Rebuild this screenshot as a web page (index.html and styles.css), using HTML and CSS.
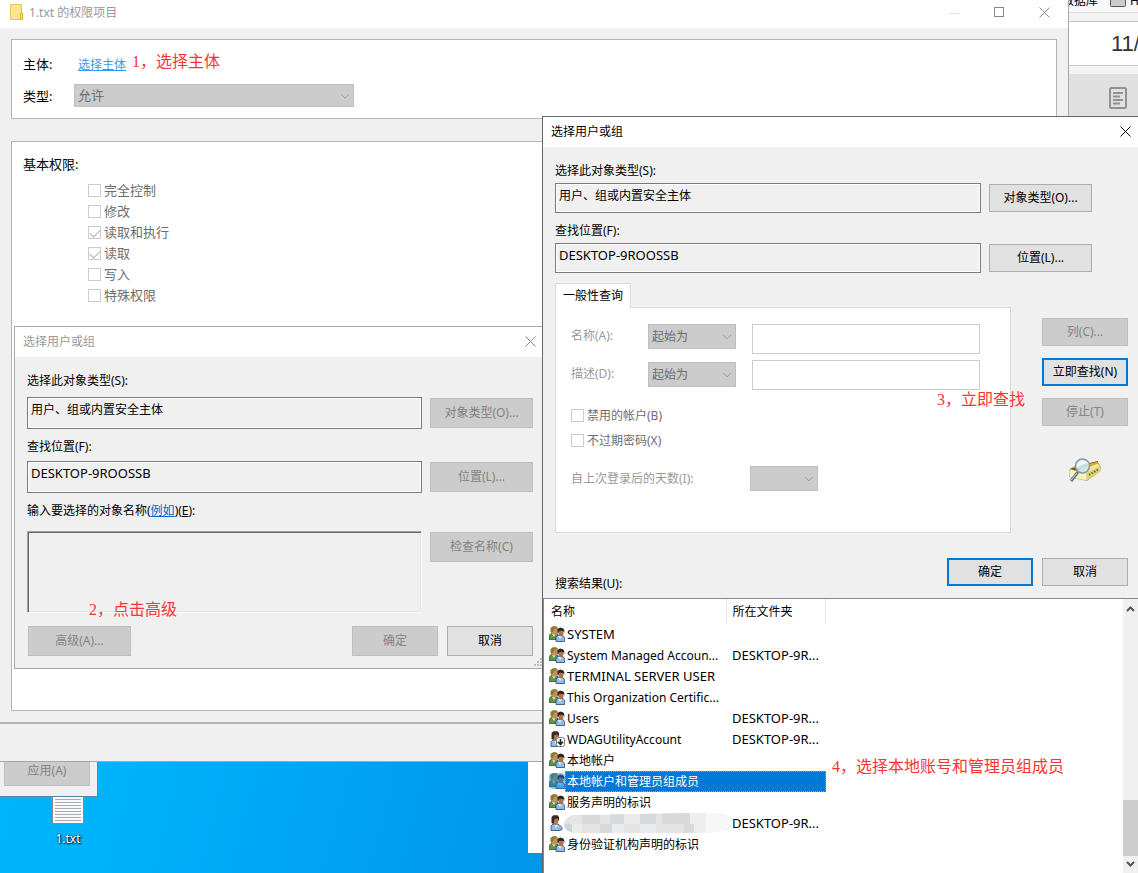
FILE: index.html
```html
<!DOCTYPE html>
<html lang="zh-CN">
<head>
<meta charset="utf-8">
<title>1.txt 的权限项目</title>
<link rel="stylesheet" href="styles.css">
</head>
<body>
<svg class="defs" aria-hidden="true">
  <symbol id="chevron" viewBox="0 0 10 6"><path d="M1 1l4 4 4-4" fill="none" stroke="currentColor"/></symbol>
  <symbol id="close" viewBox="0 0 11 11"><path d="M.5.5l10 10M10.500.5l-10 10" fill="none" stroke="currentColor"/></symbol>
  <symbol id="group" viewBox="0 0 16 16">
    <path d="M0 13.500v-4l2-2 5-.5 2 2v4.500z" fill="#5f9148" stroke="#36572c" stroke-width=".8"/>
    <path d="M3 8l2 3 1.500-3z" fill="#d9ecc7"/>
    <path d="M2 2l2-1.500h3L9 2v4L7 8.500H4L2 6.500z" fill="#c6925c"/>
    <path d="M1.500 6V2L4 .3h3L9 2 5.500 2.500 4 6z" fill="#8d7a35"/>
    <path d="M7 15.500v-4L9 9l5 .500 1.600 2v4z" fill="#8fbcec" stroke="#294566" stroke-width=".8"/>
    <path d="M9 10l2 3 2-3z" fill="#e4f1ff"/>
    <path d="M9 4l4-1 1.500 2v3L13 10.300h-2L9.500 8z" fill="#a9744a"/>
    <path d="M8.500 8V3L11 1.500l3 .7L15.300 4v3l-1-2-3.800-.2z" fill="#2b2420"/>
  </symbol>
  <symbol id="user" viewBox="0 0 16 16">
    <path d="M2 15.500V11l2-2 6 .5 3 3v2l-2 1z" fill="#8fbcec" stroke="#294566" stroke-width=".8"/>
    <path d="M5 9.500l2 4 2-4z" fill="#e4f1ff"/>
    <path d="M3.500 3l4-1 1.700 2v4l-2 2.300H5.500L3.500 8z" fill="#b07d52"/>
    <path d="M2.500 8V2L4.500.3h4L10 2v4.500L8.500 3.500l-3 .500-1 5z" fill="#3a2a22"/>
  </symbol>
  <symbol id="down-badge" viewBox="0 0 16 16">
    <rect x="7.500" y="6.500" width="8" height="9" rx="2" fill="#fff" stroke="#777"/>
    <path d="M11.500 8v5M9 10.800l2.500 2.700 2.500-2.700" stroke="#222" stroke-width="1.600" fill="none"/>
  </symbol>
</svg>

<div class="desktop">
  <div class="file-shortcut">
    <svg width="32" height="40" viewBox="0 0 32 40" aria-hidden="true"><path d="M.5.5h31v39H.5z" fill="#fafafa" stroke="#8c8782"/><path d="M3 6.500h26M3 9.500h26M3 12.500h26M3 15.500h26M3 18.500h26M3 21.500h26M3 24.500h26M3 27.500h26M3 30.500h26M3 33.500h26M3 36.500h26" stroke="#a9acae"/></svg>
    <span>1.txt</span>
  </div>
  <div class="back-window"></div>

  <div class="side-app">
    <div class="side-bookmarks"><span>数据库</span><svg width="16" height="14" viewBox="0 0 16 14" aria-hidden="true"><rect x=".5" y=".5" width="15" height="13" rx="1" fill="#ccc" stroke="#555"/></svg><span>H</span></div>
    <div class="side-strip"></div>
    <div class="side-page">11/</div>
    <div class="side-strip"></div>
    <div class="side-tools">
      <svg width="18" height="22" viewBox="0 0 18 22" fill="none" stroke="#929292" stroke-width="2" aria-hidden="true"><rect x="1" y="1" width="16" height="20" rx="1.500"/><path d="M4 6h10M4 9.500h7M4 13h10M4 16.500h7"/></svg>
    </div>
  </div>

  <div class="properties-window"><button class="btn" disabled>应用(A)</button></div>

  <main class="window permission-window">
    <header class="titlebar">
      <svg width="14" height="16" viewBox="0 0 14 16" aria-hidden="true"><path d="M.5.5h11v8h1v7H.5z" fill="#ffe491" stroke="#e9c34f"/><path d="M10.500 15V9.500h2V15z" fill="#fff0a8" stroke="#dcae37"/></svg>
      <h1>1.txt 的权限项目</h1>
      <div class="caption-buttons">
        <button aria-label="最小化" disabled><svg width="11" height="11" viewBox="0 0 11 11"><path d="M0 6.500h10" stroke="#e4e4e4"/></svg></button>
        <button aria-label="最大化"><svg width="11" height="11" viewBox="0 0 11 11"><rect x=".5" y=".5" width="9" height="9" fill="none" stroke="#888"/></svg></button>
        <button aria-label="关闭"><svg width="11" height="11"><use href="#close"/></svg></button>
      </div>
    </header>
    <div class="permission-body">
      <section class="panel principal">
        <span>主体:</span><a href="#">选择主体</a>
        <label for="type">类型:</label>
        <div class="combo"><select id="type" disabled><option>允许</option></select><svg width="10" height="6"><use href="#chevron"/></svg></div>
      </section>
      <section class="panel basic">
        <h2>基本权限:</h2>
        <div class="checks">
          <label><input type="checkbox" disabled>完全控制</label>
          <label><input type="checkbox" disabled>修改</label>
          <label><input type="checkbox" disabled checked>读取和执行</label>
          <label><input type="checkbox" disabled checked>读取</label>
          <label><input type="checkbox" disabled>写入</label>
          <label><input type="checkbox" disabled>特殊权限</label>
        </div>
      </section>
    </div>
    <footer class="permission-footer"></footer>
  </main>

  <section class="window select-window">
    <header class="titlebar">
      <h1>选择用户或组</h1>
      <div class="caption-buttons"><button aria-label="关闭"><svg width="11" height="11"><use href="#close"/></svg></button></div>
    </header>
    <div class="select-body">
      <label for="s-type">选择此对象类型(S):</label>
      <input class="sunken" id="s-type" readonly value="用户、组或内置安全主体">
      <button class="btn" disabled>对象类型(O)...</button>
      <label for="s-loc">查找位置(F):</label>
      <input class="sunken latin" id="s-loc" readonly value="DESKTOP-9ROOSSB">
      <button class="btn" disabled>位置(L)...</button>
      <label for="s-names">输入要选择的对象名称(<a href="#">例如</a>)(<u>E</u>):</label>
      <textarea id="s-names" readonly></textarea>
      <button class="btn" disabled>检查名称(C)</button>
      <div class="actions">
        <button class="btn wide" disabled>高级(A)...</button>
        <button class="btn" disabled>确定</button>
        <button class="btn">取消</button>
      </div>
    </div>
    <svg class="grip" width="9" height="9" viewBox="0 0 9 9" fill="#bfbfbf" aria-hidden="true"><path d="M6 0h2v2H6zM3 3h2v2H3zM6 3h2v2H6zM0 6h2v2H0zM3 6h2v2H3zM6 6h2v2H6z"/></svg>
  </section>

  <section class="window search-window">
    <header class="titlebar">
      <h1>选择用户或组</h1>
      <div class="caption-buttons"><button aria-label="关闭"><svg width="11" height="11"><use href="#close"/></svg></button></div>
    </header>
    <div class="scope">
      <label for="q-type">选择此对象类型(S):</label>
      <input class="sunken" id="q-type" readonly value="用户、组或内置安全主体">
      <button class="btn">对象类型(O)...</button>
      <label for="q-loc">查找位置(F):</label>
      <input class="sunken latin" id="q-loc" readonly value="DESKTOP-9ROOSSB">
      <button class="btn">位置(L)...</button>
    </div>
    <div class="query">
      <div class="tabs">
        <button class="tab">一般性查询</button>
        <div class="tab-page">
          <div class="fields">
            <label for="q-name">名称(A):</label>
            <div class="combo"><select aria-label="名称条件" disabled><option>起始为</option></select><svg width="10" height="6"><use href="#chevron"/></svg></div>
            <input id="q-name" disabled>
            <label class="second" for="q-desc">描述(D):</label>
            <div class="combo second"><select aria-label="描述条件" disabled><option>起始为</option></select><svg width="10" height="6"><use href="#chevron"/></svg></div>
            <input id="q-desc" disabled>
          </div>
          <div class="checks">
            <label><input type="checkbox" disabled>禁用的帐户(B)</label>
            <label><input type="checkbox" disabled>不过期密码(X)</label>
          </div>
          <div class="days">
            <label for="q-days">自上次登录后的天数(I):</label>
            <div class="combo"><select id="q-days" disabled><option></option></select><svg width="10" height="6"><use href="#chevron"/></svg></div>
          </div>
        </div>
      </div>
      <div class="side-buttons">
        <button class="btn" disabled>列(C)...</button>
        <button class="btn primary">立即查找(N)</button>
        <button class="btn" disabled>停止(T)</button>
        <svg width="32" height="26" viewBox="0 0 32 26" aria-hidden="true">
          <path d="M1 11l6-3 22-3 2 3v5L18 22.500 1 19z" fill="#efe79a" stroke="#a69a4c" stroke-width=".8"/>
          <path d="M17 15L31 8v5.500L18 22.500z" fill="#ddd272"/>
          <path d="M17 15v7.300L1 19v-7z" fill="#f8f3b8"/>
          <path d="M17 7l12-3.500v2L20 9z" fill="#e5a51c"/><path d="M20 5.500l9-2" stroke="#8d6420"/><path d="M1 11l6-2 5 3-4 1z" fill="#625824"/>
          <path d="M20 17l9-5.500" stroke="#726a35" stroke-width="2" stroke-dasharray="1.500 1.500"/>
          <path d="M9 14l-7 9" stroke="#6d7580" stroke-width="3"/><path d="M8 15l-6 7" stroke="#c6ccd2"/>
          <circle cx="13.500" cy="8" r="7" fill="#c9e3f5" fill-opacity=".9" stroke="#8796a7" stroke-width="1.500"/>
          <path d="M7.500 10q6-5 12-4.500Q17 2 12 2.500 7.500 4.500 7.500 10" fill="#eef9ff"/>
          <path d="M8 11l11-4" stroke="#c5d6a6"/>
        </svg>
      </div>
    </div>
    <div class="confirm">
      <h2>搜索结果(U):</h2>
      <button class="btn primary">确定</button>
      <button class="btn">取消</button>
    </div>
    <div class="results">
      <div class="result-area">
      <table>
        <thead><tr><th class="name-col">名称</th><th>所在文件夹</th></tr></thead>
        <tbody>
          <tr><td><div class="entry"><svg><use href="#group"/></svg><span class="latin">SYSTEM</span></div></td><td></td></tr>
          <tr><td><div class="entry"><svg><use href="#group"/></svg><span>System Managed Accoun...</span></div></td><td class="latin">DESKTOP-9R...</td></tr>
          <tr><td><div class="entry"><svg><use href="#group"/></svg><span class="latin">TERMINAL SERVER USER</span></div></td><td></td></tr>
          <tr><td><div class="entry"><svg><use href="#group"/></svg><span>This Organization Certific...</span></div></td><td></td></tr>
          <tr><td><div class="entry"><svg><use href="#group"/></svg><span>Users</span></div></td><td class="latin">DESKTOP-9R...</td></tr>
          <tr><td><div class="entry"><svg><use href="#user"/><use href="#down-badge"/></svg><span>WDAGUtilityAccount</span></div></td><td class="latin">DESKTOP-9R...</td></tr>
          <tr><td><div class="entry"><svg><use href="#group"/></svg><span>本地帐户</span></div></td><td></td></tr>
          <tr class="selected"><td colspan="2"><div class="entry"><svg><use href="#group"/><rect width="16" height="16" rx="4" fill="#0078d7" fill-opacity=".45"/></svg><span>本地帐户和管理员组成员</span></div></td></tr>
          <tr><td><div class="entry"><svg><use href="#group"/></svg><span>服务声明的标识</span></div></td><td></td></tr>
          <tr><td><div class="entry"><svg><use href="#user"/></svg><svg class="mosaic" viewBox="0 0 168 21" aria-hidden="true"><defs><clipPath id="blob"><path d="M8 2h12l110-2 28 1q10 3 10 8-1 9-14 10l-34 1H12Q0 19 0 10 1 5 8 2z"/></clipPath></defs><g clip-path="url(#blob)"><path d="M0 0h168v21H0z" fill="#e4e4e4"/><path d="M18 0h18v11H18zM46 0h14v11H46zM76 0h16v11H76zM98 0h28v11H98zM36 11h12v10H36zM120 11h10v10h-10z" fill="#d8d9da"/><path d="M60 0h16v11H60zM8 11h10v10H8zM48 11h12v10H48zM76 11h16v10H76z" fill="#e9ebed"/><path d="M126 0h16v11h-16zM130 11h12v10h-12z" fill="#eee"/><path d="M142 0h26v21h-26z" fill="#f7f7f7"/><path d="M0 11h8v10H0z" fill="#cdd5dc"/></g></svg></div></td><td class="latin">DESKTOP-9R...</td></tr>
          <tr><td><div class="entry"><svg><use href="#group"/></svg><span>身份验证机构声明的标识</span></div></td><td></td></tr>
        </tbody>
      </table>
      </div>
      <div class="scrollbar">
        <svg viewBox="0 0 15 17" aria-hidden="true"><path d="M4 12l3.500-3.500L11 12" fill="none" stroke="#555" stroke-width="2"/></svg>
        <div class="thumb"></div>
        <svg viewBox="0 0 15 17" aria-hidden="true"><path d="M4 6l3.500 3.500L11 6" fill="none" stroke="#555" stroke-width="2"/></svg>
      </div>
    </div>
  </section>

  <p class="note note-1">1，选择主体</p>
  <p class="note note-2">2，点击高级</p>
  <p class="note note-3">3，立即查找</p>
  <p class="note note-4">4，选择本地账号和管理员组成员</p>
</div>
</body>
</html>
```

FILE: styles.css
```css
* { box-sizing: border-box; }
body, h1, h2, p { margin: 0; }
body, button, input, select, textarea {
  font-family: "Noto Sans", "Noto Sans CJK SC", sans-serif;
  font-size: 12px;
  line-height: 16px;
  color: #000;
}
h1, h2 { font-size: 12px; font-weight: 400; }
a { color: #0066cc; }
svg { display: block; flex: none; }
.defs { position: absolute; width: 0; height: 0; }

.desktop {
  position: relative;
  height: 100vh;
  overflow: hidden;
  background: linear-gradient(105deg, #00b6fb 0%, #00b4fb 22%, #0094ea 58%);
}

.window { position: absolute; display: flex; flex-direction: column; background: #f0f0f0; border: 1px solid #a8a8a8; }
.titlebar { display: flex; align-items: center; height: 30px; flex: none; padding: 0 5px 2px 8px; background: #fff; color: #999; }
.titlebar h1 { padding-top: 1px; }
.caption-buttons { display: flex; margin-left: auto; }
.caption-buttons button { padding: 0; border: 0; background: none; color: #888; }

.btn {
  height: 30px;
  padding: 0;
  border: 1px solid #adadad;
  background: #e1e1e1;
  white-space: nowrap;
}
.btn:disabled { background: #ccc; border-color: #bfbfbf; color: #838383; }
.btn.primary { border: 2px solid #0078d7; }

.combo { display: grid; align-items: center; color: #a3a3a3; }
.combo > * { grid-area: 1 / 1; }
.combo select {
  appearance: none;
  width: 100%;
  height: 25px;
  padding: 0 3px;
  border: 1px solid #bfbfbf;
  border-radius: 0;
  background: #ccc;
  color: #6d6d6d;
  opacity: 1;
}
.combo svg { justify-self: end; margin-right: 4px; }

.checks label { display: flex; align-items: center; gap: 3px; color: #6d6d6d; }
.checks input {
  appearance: none;
  display: grid;
  place-items: center;
  width: 13px;
  height: 13px;
  margin: 0;
  border: 1px solid #ccc;
  background: #fff;
}
.checks input:checked::before {
  content: "";
  width: 9px;
  height: 5px;
  border: solid #b0b0b0;
  border-width: 0 0 1px 1px;
  transform: translateY(-1px) rotate(-45deg);
}

.sunken {
  width: 100%;
  height: 32px;
  padding: 0 3px 9px;
  border: 1px solid #7a7a7a;
  border-radius: 0;
  background: #f0f0f0;
  box-shadow: inset 0 0 0 1px #fff;
}
.latin { font-size: 13px; }

/* Desktop items */
.file-shortcut { position: absolute; left: 40px; top: 784px; width: 56px; display: flex; flex-direction: column; align-items: center; gap: 7px; color: #fff; text-shadow: 1px 1px 2px #000, 0 0 2px #000; }
.back-window { position: absolute; left: 528px; top: 700px; width: 200px; height: 153px; background: #fff; }
.properties-window { position: absolute; left: 0; top: 700px; width: 98px; height: 97px; padding: 56px 7px 10px 4px; border: solid #55869c; border-width: 0 1px 1px 0; background: #f0f0f0; }
.properties-window .btn { width: 100%; }

/* Application at the right edge */
.side-app { position: absolute; right: 0; top: 0; width: 70px; background: #f3f3f3; overflow: hidden; white-space: nowrap; }
.side-bookmarks { display: flex; align-items: flex-start; gap: 12px; height: 13px; border-bottom: 1px solid #ddd; background: #f8f8f8; }
.side-bookmarks > * { margin-top: -7px; }
.side-bookmarks span:first-child { margin-left: -6px; }
.side-bookmarks span:last-child { margin-left: -8px; }
.side-strip { height: 8px; }
.side-page { height: 45px; padding-left: 43px; border: solid #c8c8c8; border-width: 1px 0; background: #fff; font: 22px/43px "Liberation Sans", sans-serif; color: #333; }
.side-tools { height: 60px; padding: 13px 11px; background: #e0e0e0; }
.side-tools svg { margin-left: auto; }

/* Permission entry window */
.permission-window { left: 0; top: 0; right: 69px; border-width: 0 1px 1px 0; font-size: 13px; }
.permission-window .titlebar { height: 28px; padding: 0 18px 4px 10px; gap: 5px; }
.permission-window .titlebar h1 { padding-top: 2px; }
.permission-window .caption-buttons { gap: 34px; }
.permission-body { display: flex; flex-direction: column; gap: 22px; padding: 11px 11px; border-bottom: 2px solid #b4b4b4; }
.panel { border: 1px solid #b4b4b4; background: #fff; padding: 0 11px; }
.principal { display: grid; grid-template-columns: 51px 280px; align-items: center; row-gap: 8px; padding-top: 12px; padding-bottom: 11px; }
.principal > span { line-height: 24px; }
.principal a { margin-left: 4px; padding-top: 1px; font-size: 12px; color: #3399ff; }
.principal .combo select { height: 23px; padding-bottom: 2px; font-size: 13px; }
.basic { height: 570px; padding-top: 14px; }
.basic h2 { font-size: 13px; }
.basic .checks { margin: 7px 0 0 65px; }
.basic .checks label { height: 21px; }
.basic .checks input { margin-top: 2px; }
.permission-footer { height: 37px; }

/* Object picker */
.select-window { left: 14px; top: 326px; width: 530px; }
.select-window .titlebar { padding-right: 7px; }
.select-body { display: grid; grid-template-columns: 1fr 103px; column-gap: 8px; align-items: start; padding: 16px 10px 12px 12px; }
.select-body label { grid-column: 1 / -1; margin-bottom: 8px; }
.select-body .sunken { margin-bottom: 10px; }
.select-body .sunken + .btn { margin-top: 1px; }
.select-body label:nth-of-type(2) { margin-bottom: 6px; }
.select-body label:nth-of-type(3) { margin-bottom: 12px; }
.select-body textarea { width: 100%; height: 82px; resize: none; border: 1px solid; border-color: #a0a0a0 #fff #fff #a0a0a0; box-shadow: inset 1px 1px #696969, inset -1px -1px #e3e3e3; background: #f0f0f0; }
.select-body textarea + .btn { margin-top: 1px; }
.actions { grid-column: 1 / -1; display: flex; gap: 9px; margin-top: 13px; padding-left: 1px; }
.actions .btn { width: 86px; }
.actions .wide { width: 103px; margin-right: auto; }
.grip { position: absolute; right: 0; bottom: 1px; }

/* Advanced search window */
.search-window { left: 542px; right: 0; top: 116px; bottom: 0; border: solid #666; border-width: 1px 0 0 1px; }
.search-window .titlebar { color: #000; padding-right: 7px; }
.search-window .caption-buttons button { color: #000; }
.search-window .btn { height: 28px; }
.scope { display: grid; grid-template-columns: 1fr 103px; column-gap: 8px; align-items: start; padding: 16px 46px 0 12px; }
.scope label { grid-column: 1 / -1; margin-bottom: 4px; }
.scope .sunken { height: 30px; margin-bottom: 10px; padding-bottom: 7px; }
.scope .sunken.latin { margin-bottom: 9px; }
.scope .btn { margin-top: 1px; }
.query { display: flex; gap: 31px; padding: 0 10px 0 12px; }
.tabs { flex: 1; margin-top: 1px; }
.tab { display: block; width: 76px; height: 25px; padding: 0; border: 1px solid #d9d9d9; border-bottom: 0; background: #fff; margin-bottom: -1px; position: relative; }
.tab-page { height: 226px; padding: 16px 30px 0 15px; border: 1px solid #d9d9d9; background: #fff; }
.fields { display: grid; grid-template-columns: 61px 88px 1fr; column-gap: 16px; row-gap: 6px; align-items: start; }
.fields label { padding-top: 4px; }
.fields .second { margin-top: 2px; }
.fields label, .days label { color: #999; }
.fields input { width: 100%; height: 30px; border: 1px solid #ccc; background: #fff; }
.tab-page .checks { margin-top: 13px; }
.tab-page .checks label { height: 25px; }
.days { display: flex; align-items: center; justify-content: space-between; margin-top: 13px; padding-right: 162px; }
.days .combo { width: 68px; }
.side-buttons { display: flex; flex-direction: column; gap: 12px; width: 86px; margin-top: 36px; }
.side-buttons svg { margin: 20px auto 0; }
.confirm { display: flex; align-items: center; gap: 9px; padding: 25px 10px 12px 12px; }
.confirm h2 { align-self: flex-end; margin: 0 auto -6px 0; }
.confirm .btn { width: 86px; }
.results { display: flex; flex: 1; min-height: 0; border: solid #828790; border-width: 1px 0 0 1px; background: #fff; }
.result-area { flex: 1; min-width: 0; overflow: hidden; }
table { width: 282px; table-layout: fixed; border-collapse: collapse; }
th { height: 25px; padding: 0 6px; border-right: 1px solid #e5e5e5; font-weight: 400; text-align: left; }
th.name-col { width: 182px; padding-left: 7px; }
td { height: 21px; padding: 0 0 0 6px; white-space: nowrap; }
td:first-child { padding-left: 5px; }
td.latin, .entry .latin { line-height: 14px; padding-bottom: 2px; }
.entry { display: flex; align-items: center; height: 21px; }
.entry svg { width: 16px; height: 16px; margin-bottom: 2px; }
.entry span { flex: 1; padding-left: 2px; }
.entry .mosaic { width: 168px; height: 21px; margin: 0 -20px 0 -1px; }
.selected span { background: #0078d7; color: #fff; line-height: 19px; border: 1px dotted #e89140; padding-left: 1px; }
.selected .entry span { padding-left: 1px; }
.scrollbar { display: flex; flex-direction: column; width: 15px; background: #f0f0f0; }
.scrollbar svg { width: 15px; height: 17px; }
.thumb { height: 56px; margin-top: auto; background: #cdcdcd; }

/* Step notes laid over the windows */
.note { position: absolute; font: 16px/20px "Liberation Serif", "Noto Sans CJK SC", sans-serif; color: #f33; white-space: nowrap; }
.note-1 { left: 132px; top: 52px; }
.note-2 { left: 89px; top: 600px; }
.note-3 { left: 937px; top: 390px; }
.note-4 { left: 832px; top: 757px; }
```
